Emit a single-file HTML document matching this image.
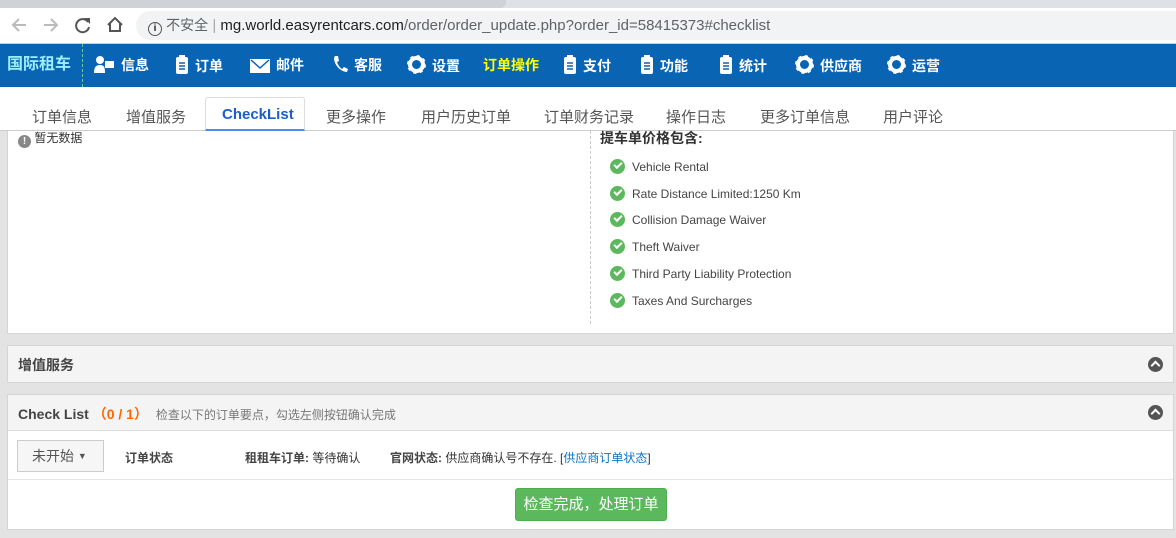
<!DOCTYPE html>
<html><head><meta charset="utf-8"><style>
*{margin:0;padding:0;box-sizing:border-box}
body{width:1176px;height:538px;overflow:hidden;background:#e3e3e3;font-family:"Liberation Sans","Noto Sans CJK SC",sans-serif;font-size:13px;color:#333;position:relative}
.abs{position:absolute}
.tabstrip{left:0;top:0;width:1176px;height:8px;background:#dee1e6}
.tabstrip .t{position:absolute;top:0;left:0;width:506px;height:8px;background:#cfd2d7;border-radius:0 0 6px 0}
.addr{left:0;top:8px;width:1176px;height:36px;background:#fff;border-bottom:1px solid #ccc}
.url{left:136px;top:11px;width:1040px;height:29px;background:#f1f3f4;border-radius:15px 0 0 15px;font-size:15px;line-height:29px;color:#202124;padding-left:12px}
.nav{left:0;top:44px;width:1176px;height:43px;background:#0a64b4;color:#fff;font-weight:bold;font-size:14px}
.nav span{position:absolute;top:11px;white-space:nowrap;line-height:20px}
.tabs{left:0;top:87px;width:1176px;height:44px;background:#fff;border-bottom:1px solid #ccc;font-size:15px;color:#555}
.tabs span{position:absolute;top:19px}
.ico{display:inline-block;vertical-align:-3px;margin-right:6px}
.panel{background:#fff;border:1px solid #d5d5d5}
.chk{display:inline-block;width:15px;height:15px;border-radius:50%;background:#5cb85c;position:relative;vertical-align:-3px;margin-right:7px}
.chk:after{content:"";position:absolute;left:4px;top:3px;width:6px;height:3px;border-left:2px solid #fff;border-bottom:2px solid #fff;transform:rotate(-45deg)}
.li{position:absolute;left:610px;font-size:12px;color:#444}
.up{position:absolute;width:15px;height:15px;border-radius:50%;background:#555}
.up:after{content:"";position:absolute;left:4px;top:5px;width:5px;height:5px;border-left:2px solid #fff;border-top:2px solid #fff;transform:rotate(45deg)}
</style></head><body>
<div class="abs tabstrip"><div class="t"></div></div>
<div class="abs addr"></div>
<svg class="abs" style="left:10px;top:17px" width="18" height="16"><path d="M16 8H3M9 2L3 8L9 14" fill="none" stroke="#bbb" stroke-width="2"/></svg>
<svg class="abs" style="left:42px;top:17px" width="18" height="16"><path d="M2 8H15M9 2L15 8L9 14" fill="none" stroke="#bbb" stroke-width="2"/></svg>
<svg class="abs" style="left:74px;top:16px" width="18" height="18"><path d="M14 6A6.5 6.5 0 1 0 15 11" fill="none" stroke="#555" stroke-width="2"/><path d="M10 2H16V8Z" fill="#555"/></svg>
<svg class="abs" style="left:106px;top:16px" width="18" height="17"><path d="M2 9L9 2L16 9M4 7V15H14V7" fill="none" stroke="#555" stroke-width="2"/></svg>
<div class="abs url"><span style="display:inline-block;width:14px;height:14px;border:1.5px solid #555;border-radius:50%;font-size:10px;line-height:11px;text-align:center;vertical-align:-1px;font-weight:bold">i</span> <span style="color:#5f6368;font-size:14px">不安全</span> <span style="color:#aaa">|</span> mg.world.easyrentcars.com<span style="color:#5f6368">/order/order_update.php?order_id=58415373#checklist</span></div>

<div class="abs nav">
<span style="left:7px;font-size:16px;color:#9ef">国际租车</span>
<div class="abs" style="left:82px;top:0;height:43px;border-left:1px dashed #6c9"></div>
<span style="left:93px"><svg class="ico" width="22" height="18"><circle cx="7" cy="5" r="4" fill="#fff"/><path d="M1 18C1 12 3 10 7 10C11 10 12 12 12 18Z" fill="#fff"/><rect x="12" y="6" width="9" height="7" fill="#fff"/></svg>信息</span>
<span style="left:175px"><svg class="ico" width="14" height="19"><rect x="1" y="2" width="12" height="17" rx="2" fill="#fff"/><rect x="4" y="0" width="6" height="4" fill="#fff"/><path d="M4 8H10M4 11H10M4 14H10" stroke="#0a64b4" stroke-width="1.5"/></svg>订单</span>
<span style="left:250px"><svg class="ico" width="20" height="15"><rect x="0" y="1" width="20" height="14" fill="#fff"/><path d="M1 2L10 10L19 2" stroke="#0a64b4" stroke-width="1.5" fill="none"/></svg>邮件</span>
<span style="left:332px"><svg class="ico" width="16" height="18"><path d="M3 1L6 1L7 6L5 7C6 10 8 13 10 14L12 12L16 14L15 17C9 17 2 10 2 3Z" fill="#fff"/></svg>客服</span>
<span style="left:407px"><svg class="ico" width="19" height="19"><circle cx="9.5" cy="9.5" r="6.5" fill="none" stroke="#fff" stroke-width="4" /><circle cx="9.5" cy="9.5" r="8" fill="none" stroke="#fff" stroke-width="3" stroke-dasharray="3 3.28"/></svg>设置</span>
<span style="left:483px;color:#ff0">订单操作</span>
<span style="left:563px"><svg class="ico" width="14" height="19"><rect x="1" y="2" width="12" height="17" rx="2" fill="#fff"/><rect x="4" y="0" width="6" height="4" fill="#fff"/><path d="M4 8H10M4 11H10M4 14H10" stroke="#0a64b4" stroke-width="1.5"/></svg>支付</span>
<span style="left:640px"><svg class="ico" width="14" height="19"><rect x="1" y="2" width="12" height="17" rx="2" fill="#fff"/><rect x="4" y="0" width="6" height="4" fill="#fff"/><path d="M4 8H10M4 11H10M4 14H10" stroke="#0a64b4" stroke-width="1.5"/></svg>功能</span>
<span style="left:719px"><svg class="ico" width="14" height="19"><rect x="1" y="2" width="12" height="17" rx="2" fill="#fff"/><rect x="4" y="0" width="6" height="4" fill="#fff"/><path d="M4 8H10M4 11H10M4 14H10" stroke="#0a64b4" stroke-width="1.5"/></svg>统计</span>
<span style="left:795px"><svg class="ico" width="19" height="19"><circle cx="9.5" cy="9.5" r="6.5" fill="none" stroke="#fff" stroke-width="4" /><circle cx="9.5" cy="9.5" r="8" fill="none" stroke="#fff" stroke-width="3" stroke-dasharray="3 3.28"/></svg>供应商</span>
<span style="left:887px"><svg class="ico" width="19" height="19"><circle cx="9.5" cy="9.5" r="6.5" fill="none" stroke="#fff" stroke-width="4" /><circle cx="9.5" cy="9.5" r="8" fill="none" stroke="#fff" stroke-width="3" stroke-dasharray="3 3.28"/></svg>运营</span>
</div>

<div class="abs tabs">
<span style="left:32px">订单信息</span>
<span style="left:126px">增值服务</span>
<div class="abs" style="left:205px;top:10px;width:100px;height:34px;border:1px solid #ddd;border-bottom:2px solid #4a90e2;border-radius:3px 3px 0 0;background:#fff"></div>
<span style="left:222px;color:#1a5fc9;font-weight:bold">CheckList</span>
<span style="left:326px">更多操作</span>
<span style="left:421px">用户历史订单</span>
<span style="left:544px">订单财务记录</span>
<span style="left:666px">操作日志</span>
<span style="left:760px">更多订单信息</span>
<span style="left:883px">用户评论</span>
</div>

<div class="abs panel" style="left:7px;top:131px;width:1167px;height:203px;border-top:none"></div>
<div class="abs" style="left:18px;top:129px;font-size:12px;color:#333"><span style="display:inline-block;width:13px;height:13px;border-radius:50%;background:#888;color:#fff;font-size:10px;text-align:center;line-height:13px;font-weight:bold;vertical-align:-2px">!</span> 暂无数据</div>
<div class="abs" style="left:590px;top:131px;height:193px;border-left:1px dashed #ccc"></div>
<div class="abs" style="left:600px;top:128px;font-size:14px;font-weight:bold;color:#333">提车单价格包含:</div>
<div class="li" style="top:159px"><span class="chk"></span>Vehicle Rental</div>
<div class="li" style="top:186px"><span class="chk"></span>Rate Distance Limited:1250 Km</div>
<div class="li" style="top:212px"><span class="chk"></span>Collision Damage Waiver</div>
<div class="li" style="top:239px"><span class="chk"></span>Theft Waiver</div>
<div class="li" style="top:266px"><span class="chk"></span>Third Party Liability Protection</div>
<div class="li" style="top:293px"><span class="chk"></span>Taxes And Surcharges</div>

<div class="abs panel" style="left:7px;top:345px;width:1167px;height:38px;background:#f4f4f4"></div>
<div class="abs" style="left:18px;top:355px;font-size:14px;font-weight:bold;color:#444">增值服务</div>
<div class="up" style="left:1148px;top:357px"></div>

<div class="abs panel" style="left:7px;top:394px;width:1167px;height:136px"></div>
<div class="abs" style="left:8px;top:395px;width:1165px;height:36px;background:#f4f4f4;border-bottom:1px solid #ddd"></div>
<div class="abs" style="left:18px;top:404px;font-size:14px;font-weight:bold;color:#444">Check List <span style="color:#f60;font-weight:bold">（0 / 1）</span> <span style="font-size:12px;color:#777;font-weight:normal;margin-left:4px">检查以下的订单要点，勾选左侧按钮确认完成</span></div>
<div class="up" style="left:1148px;top:405px"></div>
<div class="abs" style="left:17px;top:440px;width:87px;height:32px;border:1px solid #ccc;background:#f6f6f6;font-size:14px;color:#555;line-height:30px;padding-left:14px">未开始 <span style="font-size:9px;vertical-align:2px">&#9660;</span></div>
<div class="abs" style="left:125px;top:449px;font-size:12px;font-weight:bold;color:#444">订单状态</div>
<div class="abs" style="left:245px;top:449px;font-size:12px;color:#333"><b style="color:#444">租租车订单:</b> 等待确认</div>
<div class="abs" style="left:390px;top:449px;font-size:12px;color:#333"><b style="color:#444">官网状态:</b> 供应商确认号不存在. [<span style="color:#0a73c8">供应商订单状态</span>]</div>
<div class="abs" style="left:8px;top:479px;width:1165px;border-top:1px solid #e5e5e5"></div>
<div class="abs" style="left:515px;top:488px;width:152px;height:33px;background:#5cb85c;border:1px solid #4cae4c;border-radius:3px;color:#fff;font-size:15px;text-align:center;line-height:31px">检查完成，处理订单</div>
</body></html>
